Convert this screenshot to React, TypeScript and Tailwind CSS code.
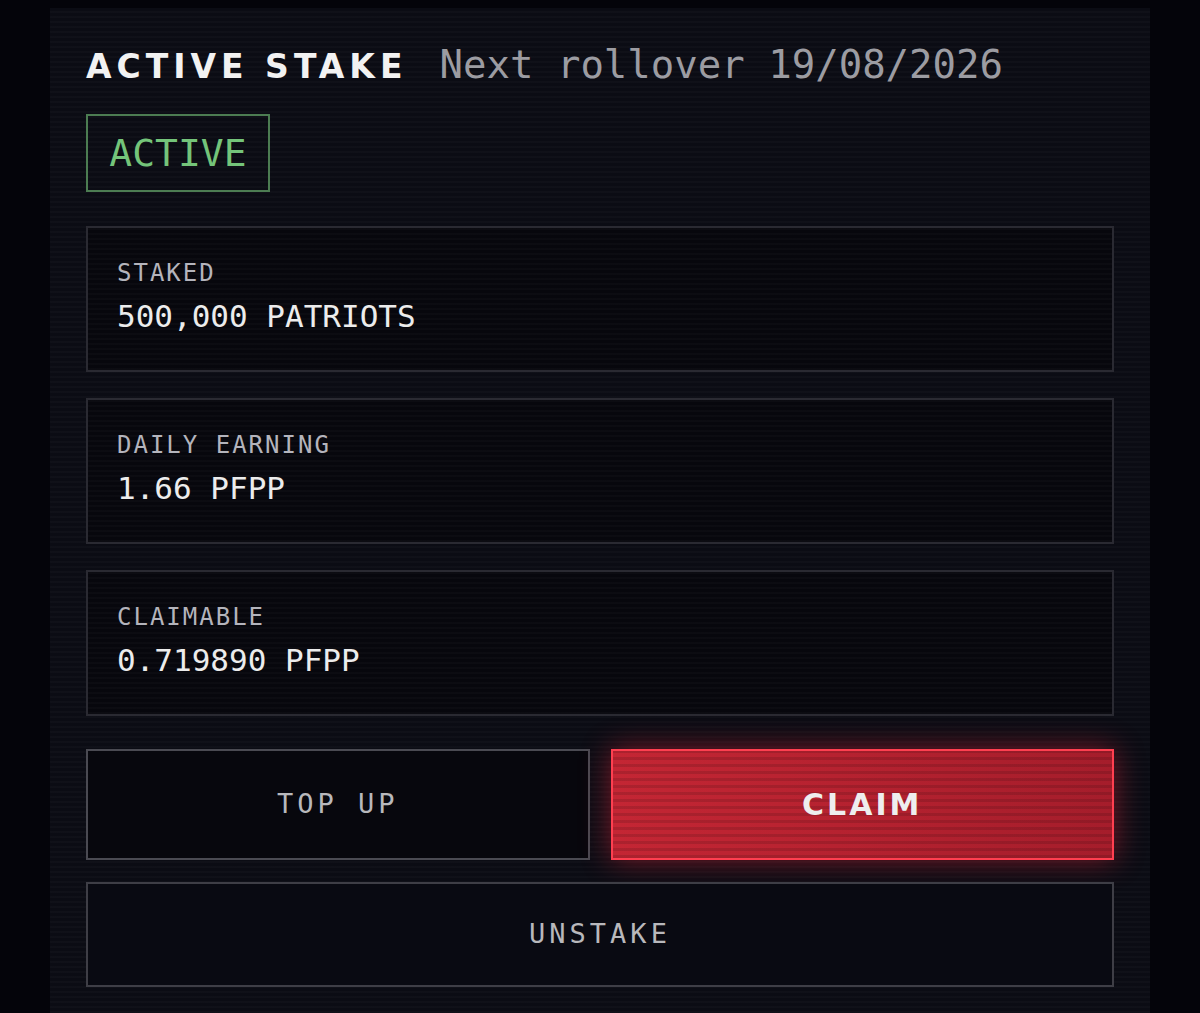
const mono = "font-['DejaVu_Sans_Mono','Liberation_Mono',monospace]";
const wide = "font-['DejaVu_Sans','Liberation_Sans',sans-serif]";
const scan =
  'bg-[repeating-linear-gradient(0deg,rgba(255,255,255,0.018)_0px,rgba(255,255,255,0.018)_2px,transparent_2px,transparent_5px)]';

type StatProps = {label: string; value: string};

function StatCard({label, value}: StatProps) {
  return (
    <div className={`h-[146px] border-2 border-[#2a2a32] bg-[#07070d] px-[29px] pt-[30px] ${scan}`}>
      <div className={`${mono} text-[24px] leading-[30px] tracking-[2px] text-[#b4b4bc]`}>{label}</div>
      <div className={`${mono} mt-[10px] text-[31px] leading-[36px] text-[#ececec]`}>{value}</div>
    </div>
  );
}

export default function App() {
  return (
    <div className="min-h-[1013px] w-[1200px] bg-[#04040a] flex justify-center pt-[8px] overflow-hidden">
      <div className={`w-[1100px] min-h-[1005px] bg-[#0b0c14] px-[36px] pt-[28px] ${scan}`}>
        <div className="flex items-baseline gap-[32px] h-[54px]">
          <h1 className={`${wide} text-[33px] font-bold tracking-[5px] text-[#f2f2f2]`}>ACTIVE STAKE</h1>
          <span className={`${mono} text-[39px] text-[#9c9ca2]`}>Next rollover 19/08/2026</span>
        </div>

        <div className="mt-[24px] inline-flex h-[78px] w-[184px] items-center justify-center border-2 border-[#4c7c52]">
          <span className={`${mono} text-[38px] text-[#74c47a]`}>ACTIVE</span>
        </div>

        <div className="mt-[34px] flex flex-col gap-[26px]">
          <StatCard label="STAKED" value="500,000 PATRIOTS" />
          <StatCard label="DAILY EARNING" value="1.66 PFPP" />
          <StatCard label="CLAIMABLE" value="0.719890 PFPP" />
        </div>

        <div className="mt-[33px] grid grid-cols-2 gap-[21px]">
          <button
            type="button"
            className={`h-[111px] border-2 border-[#4a4a52] bg-[#07070d] ${mono} text-[27px] tracking-[4px] text-[#b8b8bc]`}
          >
            TOP&nbsp;UP
          </button>
          <button
            type="button"
            className={`h-[111px] border-2 border-[#ff3f50] bg-[linear-gradient(90deg,#c42634,#a51d2b)] shadow-[0_0_28px_rgba(255,40,60,0.45)] ${wide} text-[30px] font-bold tracking-[3px] text-[#eeeeee]`}
          >
            <div className="flex h-full w-full items-center justify-center bg-[repeating-linear-gradient(0deg,rgba(0,0,0,0.12)_0px,rgba(0,0,0,0.12)_3px,transparent_3px,transparent_7px)]">
              CLAIM
            </div>
          </button>
        </div>

        <button
          type="button"
          className={`mt-[22px] h-[105px] w-full border-2 border-[#3e3e46] bg-[#090a12] ${mono} text-[27px] tracking-[4px] text-[#b8b8bc]`}
        >
          UNSTAKE
        </button>
      </div>
    </div>
  );
}
